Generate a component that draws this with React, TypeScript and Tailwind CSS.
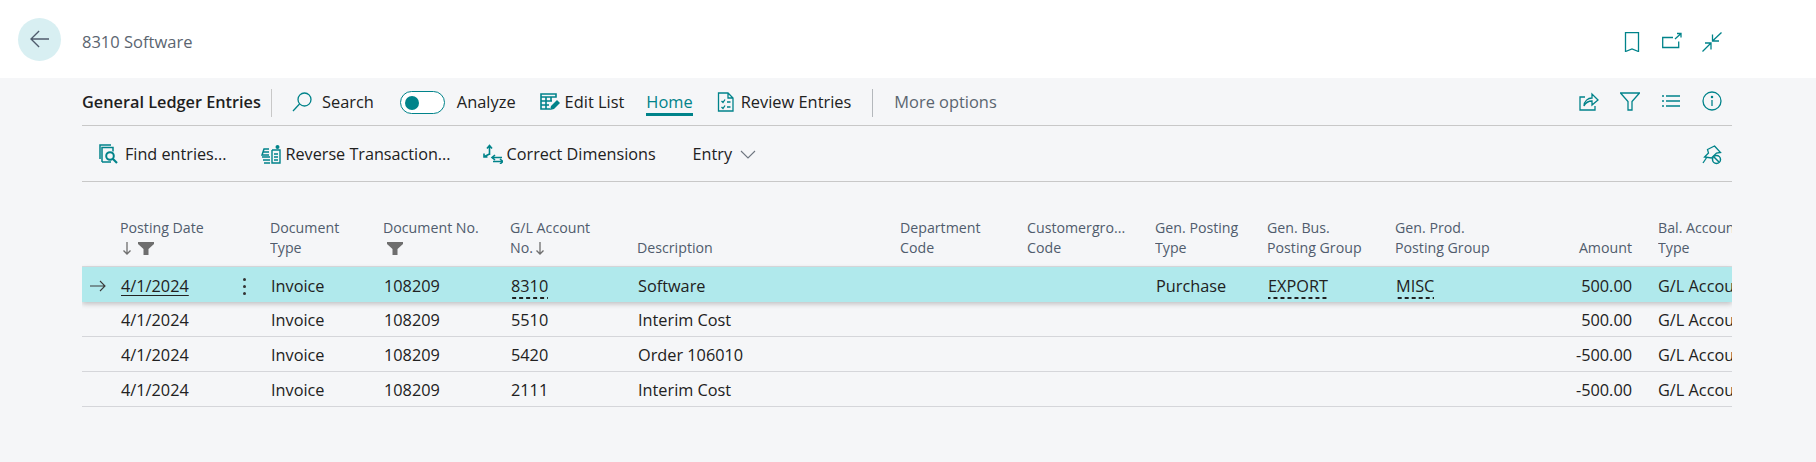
import type { ReactNode } from "react";

const TEAL = "#00838a";
const gridCols =
  "grid grid-cols-[38px_150px_113px_127px_127px_263px_127px_128px_112px_128px_120px_143px_74px]";

function Ico({ w = 20, h = 20, vb = "0 0 20 20", children }: { w?: number; h?: number; vb?: string; children: ReactNode }) {
  return (
    <svg width={w} height={h} viewBox={vb} fill="none" stroke={TEAL} strokeWidth="1.3" className="shrink-0">
      {children}
    </svg>
  );
}

const FindIcon = () => (
  <Ico>
    <path d="M1 15V1h11M3 18V3.500h11v4M3 18h9" strokeWidth="1.500" />
    <circle cx="11" cy="12" r="3.800" strokeWidth="2" />
    <path d="M14 15l4 4" strokeWidth="2.200" />
  </Ico>
);
const ReverseIcon = () => (
  <Ico>
    <path d="M8 5H3L1 11h7M2 8h6M1 13h8M2 16h7M3 19h6" strokeWidth="1.500" />
    <path d="M11 6h8v13h-8V6M13 10h4M13 13h4M13 16h4" strokeWidth="1.400" />
    <circle cx="16.500" cy="3" r="2" fill={TEAL} stroke="none" />
  </Ico>
);
const CorrectIcon = () => (
  <Ico>
    <path d="M6.500 2v9M4 4.500l2.500-3 2.500 3M6.500 10L1.500 12.500M1 9.500v3.500h3.500" strokeWidth="1.600" />
    <path d="M9 13.500h10M12 11l-3 2.500 3 2.500M10 17.500h10M17 15l3 2.500-3 2.500" strokeWidth="1.600" />
  </Ico>
);
const EditListIcon = () => (
  <Ico>
    <path d="M1 2h15v3H1zM1 5v12h9M1 9h11M1 13h8M6 5v12M11 5v4" strokeWidth="1.600" />
    <path d="M10 18l1-4 6-6 3 3-6 6z" fill={TEAL} stroke="none" />
  </Ico>
);
const ReviewIcon = () => (
  <Ico>
    <path d="M2.500 1h9.500l5 5v13h-14.500zM12 1v5h5" strokeWidth="1.300" />
    <path d="M5.500 9l1.500 1.500 2-3M5.500 15l1.500 1.500 2-3M11 10h3.500M11 15h3.500" strokeWidth="1.300" />
  </Ico>
);

function Action({ icon, label, className = "" }: { icon?: ReactNode; label: string; className?: string }) {
  return (
    <div className={`flex items-center text-[#212121] ${className}`}>
      {icon}
      <span>{label}</span>
    </div>
  );
}

const Funnel = () => (
  <svg width="16" height="13" viewBox="0 0 16 13" className="shrink-0">
    <path d="M0 0h16v2l-5.500 5v6h-5V7L0 2z" fill="#6e6e6e" />
  </svg>
);
const SortDown = () => (
  <svg width="10" height="13" viewBox="0 0 10 13" fill="none" stroke="#6e6e6e" strokeWidth="1.300" className="shrink-0">
    <path d="M5 0v12M1.500 8.500L5 12l3.500-3.500" />
  </svg>
);

type Head = { lines: string[]; extra?: ReactNode; right?: boolean };

const heads: Head[] = [
  { lines: [] },
  { lines: ["Posting Date"], extra: <div className="flex items-center gap-[6px] h-[20px] pl-[2px]"><SortDown /><Funnel /></div> },
  { lines: ["Document", "Type"] },
  { lines: ["Document No."], extra: <div className="flex items-center h-[20px] pl-[4px]"><Funnel /></div> },
  { lines: ["G/L Account"], extra: <div className="flex items-center gap-[2px] h-[20px]"><span>No.</span><SortDown /></div> },
  { lines: ["Description"] },
  { lines: ["Department", "Code"] },
  { lines: ["Customergro...", "Code"] },
  { lines: ["Gen. Posting", "Type"] },
  { lines: ["Gen. Bus.", "Posting Group"] },
  { lines: ["Gen. Prod.", "Posting Group"] },
  { lines: ["Amount"], right: true },
  { lines: ["Bal. Account", "Type"] },
];

const rows = [
  { no: "8310", desc: "Software", type: "Purchase", bus: "EXPORT", prod: "MISC", amount: "500.00", active: true },
  { no: "5510", desc: "Interim Cost", type: "", bus: "", prod: "", amount: "500.00", active: false },
  { no: "5420", desc: "Order 106010", type: "", bus: "", prod: "", amount: "-500.00", active: false },
  { no: "2111", desc: "Interim Cost", type: "", bus: "", prod: "", amount: "-500.00", active: false },
];

const Dashed = ({ on, children }: { on: boolean; children: ReactNode }) =>
  on ? (
    <span className="inline-block pb-[3px] leading-[20px] bg-[linear-gradient(to_right,#212121_60%,transparent_60%)] bg-[length:7px_1.5px] bg-bottom bg-repeat-x">
      {children}
    </span>
  ) : (
    <span>{children}</span>
  );

export default function App() {
  return (
    <div className="h-[462px] w-[1816px] overflow-hidden bg-[#f5f6f8] font-['Open_Sans','Noto_Sans',sans-serif] text-[#212121]">
      {/* title bar */}
      <div className="h-[78px] bg-white flex items-center pl-[18px] pr-[94px]">
        <div className="w-[43px] h-[43px] rounded-full bg-[#d8eff2] flex items-center justify-center">
          <svg width="20" height="18" viewBox="0 0 22 20" fill="none" stroke="#505c6d" strokeWidth="1.500">
            <path d="M1 10h20M10 1l-9 9 9 9" />
          </svg>
        </div>
        <div className="ml-[21px] mt-[6px] text-[#5b6570] text-[16.500px]">8310 Software</div>
        <div className="ml-auto flex items-center gap-[20px] mt-[5px]">
          <Ico>
            <path d="M3.500 0.500h13v19l-6.500-2.500-6.500 2.500z" />
          </Ico>
          <Ico>
            <path d="M11 5.500H0.700v10h16V9.500M13 7l5.500-5M15 1.500h4v4" />
          </Ico>
          <Ico>
            <path d="M19.500 0.500L10.500 9M10.500 2.500V9H17M0.500 19.500L9 11M3 11h6v6.500" />
          </Ico>
        </div>
      </div>

      <div className="pl-[82px] w-[1732px]">
        {/* first action bar */}
        <div className="h-[48px] border-b border-[#c8c8c8] flex items-center pt-[2px] text-[16.400px]">
          <span className="font-semibold text-[#1f1f1f] text-[16.300px]">General Ledger Entries</span>
          <div className="w-px h-[28px] bg-[#c8c8c8] ml-[10px] mr-[20px]" />
          <Action
            label="Search"
            className="gap-[10px]"
            icon={
              <Ico>
                <circle cx="12.500" cy="7.500" r="6.500" />
                <path d="M7.500 12L1 19" />
              </Ico>
            }
          />
          <div className="ml-[26px] w-[45px] h-[23px] rounded-full border border-[#00838a] bg-white flex items-center pl-[4px]">
            <div className="w-[14px] h-[14px] rounded-full bg-[#00838a]" />
          </div>
          <Action label="Analyze" className="ml-[12px]" />
          <Action label="Edit List" icon={<EditListIcon />} className="ml-[24px] gap-[5px]" />
          <div className="ml-[22px] text-[#00838a] pt-[2px] border-b-[3px] border-[#00838a] leading-[22px]">Home</div>
          <Action label="Review Entries" icon={<ReviewIcon />} className="ml-[23px] gap-[5px]" />
          <div className="w-px h-[28px] bg-[#b4b8bc] ml-[21px] mr-[21px]" />
          <span className="text-[#5b6570]">More options</span>
          <div className="ml-auto flex items-center gap-[21px] pr-[10px] -mt-[3px]">
            <Ico>
              <path d="M6 6H1v13h15v-4" />
              <path d="M5 15c0-5 4-8 8-8V3l6 6-6 5v-4c-3 0-6 1-8 5z" />
            </Ico>
            <Ico>
              <path d="M0.500 2h19L12 10.500V19H8v-8.500z" />
            </Ico>
            <Ico>
              <path d="M1 5h2M5 5h14M1 10h2M5 10h14M1 15h2M5 15h14" />
            </Ico>
            <Ico>
              <circle cx="10" cy="10" r="9" />
              <path d="M10 9v6" />
              <circle cx="10" cy="6" r="0.600" fill={TEAL} />
            </Ico>
          </div>
        </div>

        {/* second action bar */}
        <div className="h-[56px] border-b border-[#c8c8c8] flex items-center pt-[2px] text-[16.200px] pl-[17px] pr-[10px]">
          <Action label="Find entries..." icon={<FindIcon />} className="gap-[6px]" />
          <Action label="Reverse Transaction..." icon={<ReverseIcon />} className="ml-[34px] gap-[5px]" />
          <Action label="Correct Dimensions" icon={<CorrectIcon />} className="ml-[32px] gap-[4px]" />
          <span className="ml-[37px]">Entry</span>
          <svg width="16" height="9" viewBox="0 0 16 9" fill="none" stroke="#6e7680" strokeWidth="1.100" className="ml-[8px]">
            <path d="M1 1l7 7 7-7" />
          </svg>
          <div className="ml-auto">
            <Ico>
              <path d="M12.500 1l6 6.500-4 .5-5 5-7-1 4-4-1-3.500z" />
              <path d="M5 12l-4 6" />
              <circle cx="14.500" cy="14.500" r="4" strokeWidth="1.500" />
              <path d="M12 12l5 5" strokeWidth="1.500" />
            </Ico>
          </div>
        </div>

        {/* table */}
        <div className="overflow-hidden w-[1650px] pb-[8px]">
          <div className={`${gridCols} h-[85px] items-end pb-[8px] text-[14.200px] leading-[20px] text-[#505c6d] border-b border-[#dcdde0]`}>
            {heads.map((h, i) => (
              <div key={i} className={h.right ? "text-right pr-[26px] whitespace-nowrap" : "whitespace-nowrap overflow-hidden"}>
                {h.lines.map((l) => (
                  <div key={l}>{l}</div>
                ))}
                {h.extra}
              </div>
            ))}
          </div>
          {rows.map((r) => (
            <div
              key={r.no}
              className={`${gridCols} h-[35px] items-center pt-[3px] text-[16.300px] ${
                r.active ? "bg-[#b0e9ec] relative shadow-[0_2px_5px_rgba(0,0,0,0.22)]" : "border-b border-[#d5d6da]"
              }`}
            >
              <div className="pl-[8px] flex items-center">
                {r.active && (
                  <svg width="16" height="12" viewBox="0 0 16 12" fill="none" stroke="#3a3a3a" strokeWidth="1.100">
                    <path d="M0 6h15M10 1l5 5-5 5" />
                  </svg>
                )}
              </div>
              <div className="pl-px flex items-center justify-between pr-[24px]">
                <span className={r.active ? "underline underline-offset-[3px]" : ""}>4/1/2024</span>
                {r.active && (
                  <span className="flex flex-col gap-[4px]">
                    <i className="block w-[3px] h-[3px] rounded-full bg-[#333]" />
                    <i className="block w-[3px] h-[3px] rounded-full bg-[#333]" />
                    <i className="block w-[3px] h-[3px] rounded-full bg-[#333]" />
                  </span>
                )}
              </div>
              <div className="pl-px">Invoice</div>
              <div className="pl-px">108209</div>
              <div className="pl-px">
                <Dashed on={r.active}>{r.no}</Dashed>
              </div>
              <div className="pl-px">{r.desc}</div>
              <div />
              <div />
              <div className="pl-px">{r.type}</div>
              <div className="pl-px">
                <Dashed on={r.active}>{r.bus}</Dashed>
              </div>
              <div className="pl-px">
                <Dashed on={r.active}>{r.prod}</Dashed>
              </div>
              <div className="text-right pr-[26px]">{r.amount}</div>
              <div className="whitespace-nowrap overflow-hidden">G/L Account</div>
            </div>
          ))}
        </div>
      </div>
    </div>
  );
}
